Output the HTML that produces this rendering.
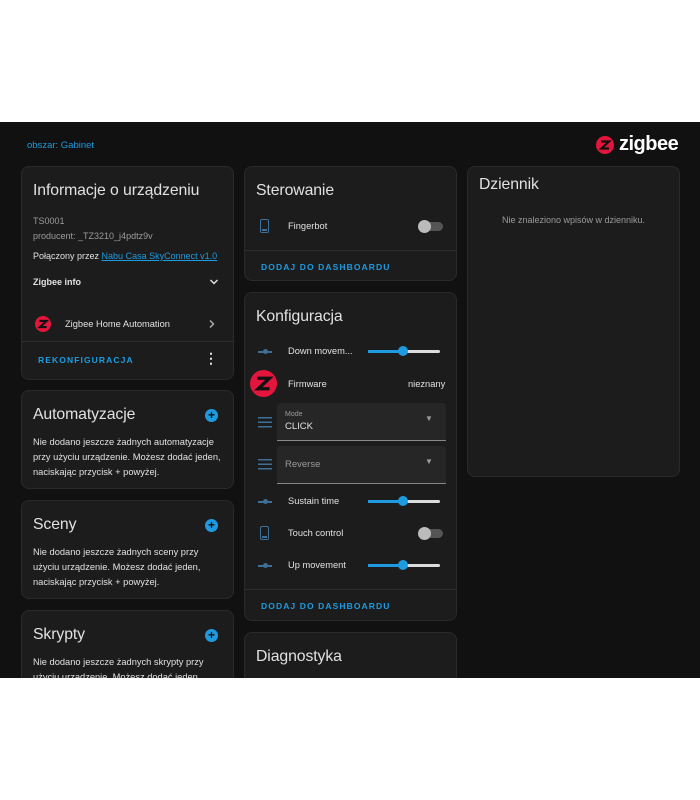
<!DOCTYPE html>
<html><head><meta charset="utf-8"><style>
*{box-sizing:border-box;margin:0;padding:0}
body{width:700px;height:800px;background:#fff;font-family:"Liberation Sans",sans-serif;position:relative;overflow:hidden}
#d{position:absolute;left:0;top:122px;width:700px;height:556px;background:#111;overflow:hidden}
.c{position:absolute;background:#1c1c1c;border:1px solid #2a2a2a;border-radius:8px}
.t{position:absolute;color:#e1e1e1;font-size:15.8px;letter-spacing:-0.1px}
.s{position:absolute;color:#e1e1e1;font-size:10px}
.g{color:#9b9b9b}
.b{position:absolute;color:#1e9be0;font-size:8.5px;font-weight:bold;letter-spacing:1.1px}
.hr{position:absolute;left:0;right:0;height:1px;background:#2e2e2e}
.plus{position:absolute;width:13px;height:13px;border-radius:50%;background:#1e9be0;color:#111;font-size:12px;line-height:13px;text-align:center;font-weight:bold}
.tog{position:absolute;width:24px;height:9px;border-radius:5px;background:#555}
.tog:before{content:"";position:absolute;left:-1px;top:-2px;width:13px;height:13px;border-radius:50%;background:#bbb}
.sl{position:absolute;width:72px;height:3px;background:#ddd;border-radius:2px}
.sl i{position:absolute;left:0;top:0;height:3px;width:36px;background:#1e9be0}
.sl b{position:absolute;left:30px;top:-4px;width:10px;height:10px;border-radius:50%;background:#1e9be0}
.sic{position:absolute;width:14px;height:2px;background:#3d6f98}
.sic:after{content:"";position:absolute;left:5px;top:-2px;width:5px;height:5px;border-radius:50%;background:#3d6f98}
.ph{position:absolute;width:9px;height:14px;border:1.5px solid #3d6f98;border-radius:2px}
.ph:after{content:"";position:absolute;left:1px;right:1px;bottom:1px;height:2px;background:#3d6f98}
.li{position:absolute;width:14px;height:11px;background:repeating-linear-gradient(#3d6f98 0 1.5px,transparent 1.5px 4.5px)}
.sel{position:absolute;left:32px;width:169px;height:38px;background:#262626;border-bottom:1px solid #888;border-radius:4px 4px 0 0}
.z{position:absolute;border-radius:50%;background:#e2153c}
</style></head><body>
<div id="d">
<div class="s" style="left:27px;top:18px;color:#1e9be0;font-size:9.5px">obszar: Gabinet</div>
<div class="z" style="left:596px;top:14px;width:18px;height:18px"><svg width="18" height="18" viewBox="0 0 18 18"><path d="M5 5.5h8L5.5 12.5h7.5" stroke="#111" stroke-width="2.2" fill="none"/></svg></div>
<div style="position:absolute;left:619px;top:11px;color:#fff;font-size:20px;font-weight:bold;letter-spacing:-0.5px">zigbee</div>

<div class="c" style="left:21px;top:44px;width:213px;height:214px">
 <div class="t" style="left:11px;top:15px">Informacje o urządzeniu</div>
 <div class="s g" style="left:11px;top:49px;font-size:9px">TS0001</div>
 <div class="s g" style="left:11px;top:64px;font-size:9px">producent: _TZ3210_j4pdtz9v</div>
 <div class="s" style="left:11px;top:84px;font-size:9px">Połączony przez <span style="color:#1e9be0;text-decoration:underline">Nabu Casa SkyConnect v1.0</span></div>
 <div class="s" style="left:11px;top:110px;font-weight:bold;font-size:9px">Zigbee info</div>
 <svg style="position:absolute;left:187px;top:111px" width="10" height="8" viewBox="0 0 10 8"><path d="M1.5 2l3.5 3.5L8.5 2" stroke="#ddd" stroke-width="1.5" fill="none"/></svg>
 <div class="z" style="left:13px;top:149px;width:16px;height:16px"><svg width="16" height="16" viewBox="0 0 18 18"><path d="M5 5.5h8L5.5 12.5h7.5" stroke="#111" stroke-width="2.4" fill="none"/></svg></div>
 <div class="s" style="left:43px;top:152px;font-size:9.3px">Zigbee Home Automation</div>
 <svg style="position:absolute;left:186px;top:152px" width="8" height="10" viewBox="0 0 8 10"><path d="M2 1.5l3.5 3.5L2 8.5" stroke="#aaa" stroke-width="1.5" fill="none"/></svg>
 <div class="hr" style="top:174px"></div>
 <div class="b" style="left:16px;top:188px">REKONFIGURACJA</div>
 <div class="s" style="left:182px;top:183px;font-size:14px;font-weight:bold">⋮</div>
</div>

<div class="c" style="left:21px;top:268px;width:213px;height:99px">
 <div class="t" style="left:11px;top:15px">Automatyzacje</div><div class="plus" style="left:183px;top:18px">+</div>
 <div class="s" style="left:11px;top:44px;width:195px;line-height:15px;font-size:9.3px">Nie dodano jeszcze żadnych automatyzacje przy użyciu urządzenie. Możesz dodać jeden, naciskając przycisk + powyżej.</div>
</div>
<div class="c" style="left:21px;top:378px;width:213px;height:99px">
 <div class="t" style="left:11px;top:15px">Sceny</div><div class="plus" style="left:183px;top:18px">+</div>
 <div class="s" style="left:11px;top:44px;width:180px;line-height:15px;font-size:9.3px">Nie dodano jeszcze żadnych sceny przy użyciu urządzenie. Możesz dodać jeden, naciskając przycisk + powyżej.</div>
</div>
<div class="c" style="left:21px;top:488px;width:213px;height:99px">
 <div class="t" style="left:11px;top:15px">Skrypty</div><div class="plus" style="left:183px;top:18px">+</div>
 <div class="s" style="left:11px;top:44px;width:180px;line-height:15px;font-size:9.3px">Nie dodano jeszcze żadnych skrypty przy użyciu urządzenie. Możesz dodać jeden, naciskając przycisk + powyżej.</div>
</div>

<div class="c" style="left:244px;top:44px;width:213px;height:115px">
 <div class="t" style="left:11px;top:15px">Sterowanie</div>
 <div class="ph" style="left:15px;top:52px"></div>
 <div class="s" style="left:43px;top:54px;font-size:9.3px">Fingerbot</div>
 <div class="tog" style="left:174px;top:55px"></div>
 <div class="hr" style="top:83px"></div>
 <div class="b" style="left:16px;top:95px">DODAJ DO DASHBOARDU</div>
</div>

<div class="c" style="left:244px;top:170px;width:213px;height:329px">
 <div class="t" style="left:11px;top:15px">Konfiguracja</div>
 <div class="sic" style="left:13px;top:58px"></div>
 <div class="s" style="left:43px;top:53px;font-size:9.3px">Down movem...</div>
 <div class="sl" style="left:123px;top:57px"><i></i><b></b></div>
 <div class="z" style="left:5px;top:77px;width:27px;height:27px"><svg width="27" height="27" viewBox="0 0 18 18"><path d="M5 5.5h8L5.5 12.5h7.5" stroke="#111" stroke-width="2.2" fill="none"/></svg></div>
 <div class="s" style="left:43px;top:86px;font-size:9.3px">Firmware</div>
 <div class="s" style="left:163px;top:86px;font-size:9.3px">nieznany</div>
 <div class="li" style="left:13px;top:124px"></div>
 <div class="sel" style="top:110px"><div class="s g" style="left:8px;top:8px;font-size:7px">Mode</div><div class="s" style="left:8px;top:18px;font-size:9.5px">CLICK</div><div class="s g" style="left:148px;top:11px;font-size:8px">▼</div></div>
 <div class="li" style="left:13px;top:166px"></div>
 <div class="sel" style="top:153px"><div class="s g" style="left:8px;top:13px;font-size:9.5px">Reverse</div><div class="s g" style="left:148px;top:11px;font-size:8px">▼</div></div>
 <div class="sic" style="left:13px;top:208px"></div>
 <div class="s" style="left:43px;top:203px;font-size:9.3px">Sustain time</div>
 <div class="sl" style="left:123px;top:207px"><i></i><b></b></div>
 <div class="ph" style="left:15px;top:233px"></div>
 <div class="s" style="left:43px;top:235px;font-size:9.3px">Touch control</div>
 <div class="tog" style="left:174px;top:236px"></div>
 <div class="sic" style="left:13px;top:272px"></div>
 <div class="s" style="left:43px;top:267px;font-size:9.3px">Up movement</div>
 <div class="sl" style="left:123px;top:271px"><i></i><b></b></div>
 <div class="hr" style="top:296px"></div>
 <div class="b" style="left:16px;top:308px">DODAJ DO DASHBOARDU</div>
</div>

<div class="c" style="left:244px;top:510px;width:213px;height:100px">
 <div class="t" style="left:11px;top:15px">Diagnostyka</div>
</div>

<div class="c" style="left:467px;top:44px;width:213px;height:311px">
 <div class="t" style="left:11px;top:9px">Dziennik</div>
 <div class="s g" style="left:0;right:0;top:48px;text-align:center;font-size:9px;position:absolute">Nie znaleziono wpisów w dzienniku.</div>
</div>
</div>
</body></html>
